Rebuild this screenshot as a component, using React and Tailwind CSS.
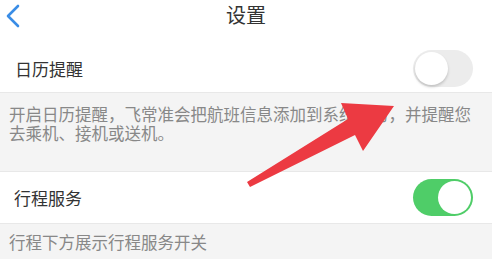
import React from "react";

const Toggle = ({ on }) => {
  return (
    <div
      className={
        "relative w-[60px] h-[37px] rounded-full " +
        (on ? "bg-[#4fcd68]" : "bg-[#ececec]")
      }
    >
      <div
        className={
          "absolute top-[2px] w-[33px] h-[33px] rounded-full bg-white " +
          (on ? "right-[2px]" : "left-[2px] shadow-[0_2px_3px_rgba(0,0,0,0.18)]")
        }
      />
    </div>
  );
};

const App = () => {
  return (
    <div
      className="relative w-[492px] h-[259px] overflow-hidden bg-[#f4f4f4]"
      style={{ fontFamily: '"Noto Sans CJK SC", "Noto Sans", sans-serif' }}
    >
      <div className="h-[45px] bg-white flex items-center relative">
        <svg className="absolute left-[5px] top-[4px]" width="16" height="24" viewBox="0 0 16 24">
          <polyline
            points="13,2 3,12 13,22"
            fill="none"
            stroke="#3a8de6"
            strokeWidth="2.6"
            strokeLinecap="round"
            strokeLinejoin="round"
          />
        </svg>
        <div className="w-full text-center text-[20px] leading-none text-[#333] -mt-[15px]">设置</div>
      </div>

      <div className="h-[47px] bg-white flex items-center justify-between pl-[15px] pr-[19px]">
        <span className="text-[17px] text-[#333]">日历提醒</span>
        <Toggle on={false} />
      </div>

      <div className="h-[80px] border-t border-[#e8e8e8] border-b pt-[12px] pl-[9px] pr-[14px] text-[16.5px] leading-[19px] text-[#888]">
        开启日历提醒，飞常准会把航班信息添加到系统日历，并提醒您去乘机、接机或送机。
      </div>

      <div className="h-[52px] bg-white flex items-center justify-between pl-[14px] pr-[19px] border-b border-[#e8e8e8]">
        <span className="text-[17px] text-[#333]">行程服务</span>
        <Toggle on={true} />
      </div>

      <div className="pt-[9px] pl-[9px] text-[16.5px] leading-[19px] text-[#888]">
        行程下方展示行程服务开关
      </div>

      <svg className="absolute left-0 top-0 pointer-events-none" width="492" height="259" viewBox="0 0 492 259">
        <polygon
          points="247,182 348,119 341,103 394,106 363,151 355,135 250,187"
          fill="#ec3a42"
          strokeLinejoin="round"
        />
      </svg>
    </div>
  );
};

export default App;
